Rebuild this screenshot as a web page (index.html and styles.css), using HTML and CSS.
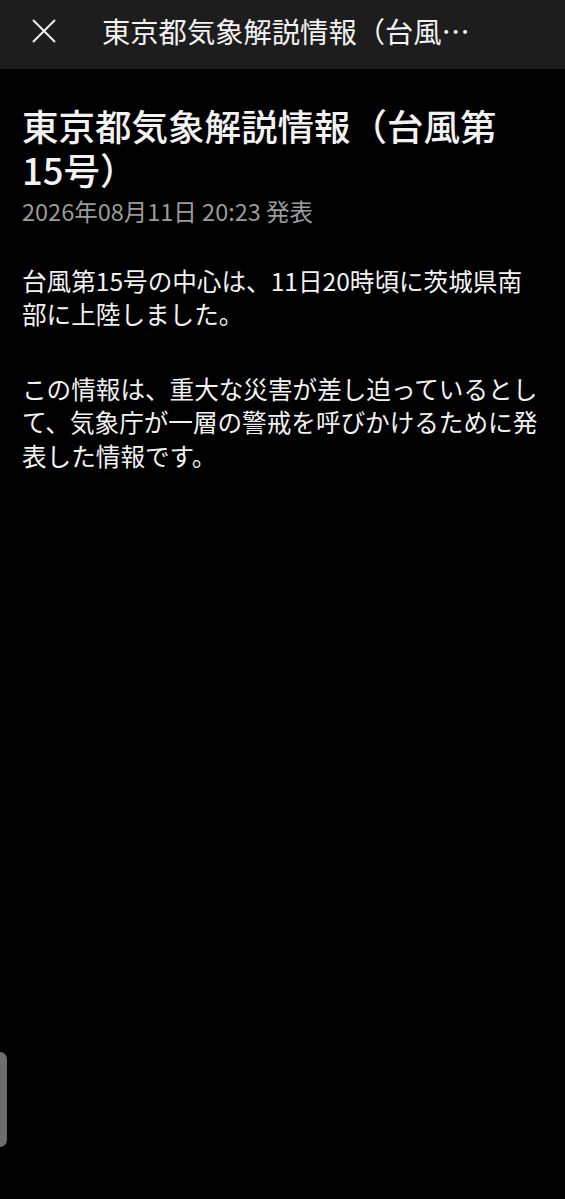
FILE: index.html
```html
<!DOCTYPE html>
<html lang="ja">
<head>
  <meta charset="UTF-8">
  <meta name="viewport" content="width=device-width, initial-scale=1.0" />
  <title>東京都気象解説情報（台風第15号）</title>
  <link rel="stylesheet" href="styles.css">
</head>
<body>

  <header class="barra">
    <button class="fechar" aria-label="閉じる">
      <svg width="24" height="24" viewBox="0 0 24 24">
        <path d="M1 1 L23 23 M23 1 L1 23" stroke="#f2f2f2" stroke-width="2" fill="none" />
      </svg>
    </button>
    <span class="barra-titulo">東京都気象解説情報（台風第15号）</span>
  </header>

  <main class="artigo">
    <h1 class="titulo">東京都気象解説情報（台風第15号）</h1>
    <p class="data">2026年08月11日 20:23 発表</p>

    <p class="texto">台風第15号の中心は、11日20時頃に茨城県南部に上陸しました。</p>
    <p class="texto">この情報は、重大な災害が差し迫っているとして、気象庁が一層の警戒を呼びかけるために発表した情報です。</p>
  </main>

  <div class="rolagem"></div>

</body>
</html>
```

FILE: styles.css
```css
:root {
  --cor-fundo: #000000;
  --cor-barra: #1d1d1d;
  --cor-texto: #f2f2f2;
  --cor-data: #9b9b9b;
  --cor-rolagem: #6d6d6d;

  --fonte: "Noto Sans CJK JP", "Noto Sans", sans-serif;
}

* {
  margin: 0;
  padding: 0;
  box-sizing: border-box;
}

body {
  font-family: var(--fonte);
  background-color: var(--cor-fundo);
  color: var(--cor-texto);
  min-height: 1199px;
}

.barra {
  height: 69px;
  background-color: var(--cor-barra);
  display: flex;
  align-items: center;
  padding: 0 81px 8px 32px;
}

.fechar {
  width: 24px;
  height: 24px;
  background: none;
  border: none;
  display: flex;
  flex-shrink: 0;
  margin-right: 46px;
}

.barra-titulo {
  flex: 1;
  min-width: 0;
  font-size: 28.3px;
  line-height: 1.2;
  white-space: nowrap;
  overflow: hidden;
  text-overflow: ellipsis;
}

.artigo {
  padding: 35px 22px 0 22px;
}

.titulo {
  max-width: 500px;
  font-size: 36.5px;
  font-weight: 500;
  line-height: 43.5px;
}

.data {
  margin-top: 5px;
  font-size: 23.5px;
  line-height: 30px;
  color: var(--cor-data);
}

.texto {
  font-size: 24.6px;
  line-height: 33.2px;
  margin-top: 41.8px;
}

.data + .texto {
  margin-top: 38px;
}

.rolagem {
  position: fixed;
  left: 0;
  top: 1052px;
  width: 7px;
  height: 95px;
  background-color: var(--cor-rolagem);
  border-radius: 0 7px 7px 0;
}
```
